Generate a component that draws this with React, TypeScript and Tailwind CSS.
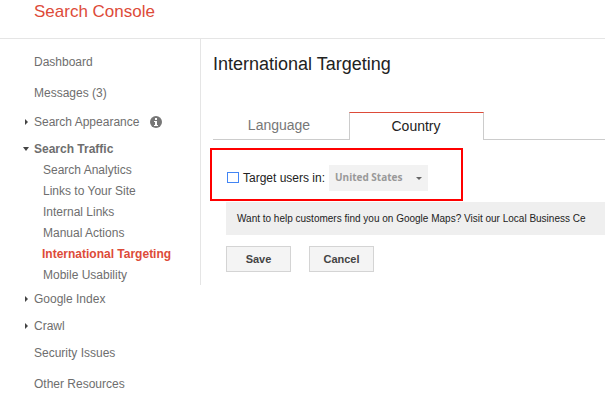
import clsx from "clsx";

interface NavRowProps {
  label: string;
  height: string;
  arrow?: "right" | "down";
  info?: boolean;
}

const trafficLinks = [
  "Search Analytics",
  "Links to Your Site",
  "Internal Links",
  "Manual Actions",
  "International Targeting",
  "Mobile Usability",
];

const Arrow = ({ direction }: { direction?: "right" | "down" }) => (
  <span className="w-3 shrink-0 flex items-center" aria-hidden="true">
    {direction === "right" && (
      <svg width="4" height="6" viewBox="0 0 4 6" className="ml-[3px] mt-px">
        <path d="M0 0L3 3L0 6Z" fill="#444" />
      </svg>
    )}
    {direction === "down" && (
      <svg width="6" height="4" viewBox="0 0 6 4" className="ml-px mt-px">
        <path d="M0 0H6L3 4Z" fill="#444" />
      </svg>
    )}
  </span>
);

const InfoIcon = () => (
  <svg width="12" height="12" viewBox="0 0 12 12" className="ml-[11px]" aria-hidden="true">
    <circle cx="6" cy="6" r="6" fill="#777" />
    <path d="M5 2H7V4H5ZM4 5H7V9H8V10H4V9H5V6H4Z" fill="#fff" />
  </svg>
);

const NavRow = ({ label, height, arrow, info }: NavRowProps) => (
  <a href="#" className={clsx("flex items-center pl-[22px]", height)}>
    <Arrow direction={arrow} />
    <span className={clsx(arrow === "down" && "font-bold")}>{label}</span>
    {info && <InfoIcon />}
  </a>
);

const Sidebar = () => (
  <nav className="w-[200px] shrink-0 pt-[7px] text-[12px] text-[#6e6e6e]">
    <NavRow label="Dashboard" height="h-[31px]" />
    <NavRow label="Messages (3)" height="h-[31px]" />
    <NavRow label="Search Appearance" height="h-[27px]" arrow="right" info />
    <NavRow label="Search Traffic" height="h-[27px]" arrow="down" />
    <ul className="-mt-[3px]">
      {trafficLinks.map((link) => (
        <li key={link}>
          <a
            href="#"
            className={clsx(
              "flex items-center h-[21px]",
              link === "International Targeting"
                ? "pl-[42px] font-bold text-[#dd4b39]"
                : "pl-[43px]"
            )}
          >
            {link}
          </a>
        </li>
      ))}
    </ul>
    <NavRow label="Google Index" height="h-[27px]" arrow="right" />
    <NavRow label="Crawl" height="h-[27px]" arrow="right" />
    <NavRow label="Security Issues" height="h-[27px]" />
    <NavRow label="Other Resources" height="h-[35px]" />
  </nav>
);

const Tabs = () => (
  <div role="tablist" className="mt-[34px] ml-3 flex h-7 text-[14px]">
    <button
      type="button"
      role="tab"
      aria-selected="false"
      className="w-[136px] pr-1 border-b border-[#ccc] text-[#777]"
    >
      Language
    </button>
    <button
      type="button"
      role="tab"
      aria-selected="true"
      className="w-[135px] pr-px border-x border-t border-x-[#ccc] border-t-[#dd4b39] text-[#222]"
    >
      Country
    </button>
    <div className="flex-1 border-b border-[#ccc]" />
  </div>
);

const TargetForm = () => (
  <div className="mt-2 ml-[9px] w-[253px] h-[53px] flex items-center border-2 border-[#f00] pl-[15px] pt-[6px]">
    <input
      id="target"
      type="checkbox"
      className="appearance-none w-3 h-[11px] border border-[#4285f4] bg-white"
    />
    <label htmlFor="target" className="ml-1 w-[86px] text-[12px] text-[#222] whitespace-nowrap">
      Target users in:
    </label>
    <div className="relative">
      <select
        disabled
        aria-label="Country"
        className="appearance-none block w-[99px] h-[26px] pl-[6px] bg-[#f2f2f2] text-[10px] font-bold text-[#999] font-['Open_Sans',sans-serif] opacity-100"
      >
        <option>United States</option>
      </select>
      <svg
        width="6"
        height="3"
        viewBox="0 0 6 3"
        className="absolute right-[6px] top-3 pointer-events-none"
        aria-hidden="true"
      >
        <path d="M0 0H6L3 3Z" fill="#666" />
      </svg>
    </div>
  </div>
);

const FormButton = ({ label }: { label: string }) => (
  <button
    type="button"
    className="w-[65px] h-[26px] border border-[#d4d4d4] bg-[#f4f4f4] text-[11px] font-bold text-[#444]"
  >
    {label}
  </button>
);

const App = () => (
  <div className="min-h-screen overflow-hidden bg-white font-['Liberation_Sans',Arial,sans-serif]">
    <header className="h-[39px] border-b border-[#e5e5e5] pl-[34px]">
      <h1 className="text-[17px] leading-[23px] text-[#dd4b39]">Search Console</h1>
    </header>
    <div className="flex items-start">
      <Sidebar />
      <main className="flex-1 min-w-0 h-[246px] border-l border-[#e5e5e5]">
        <h2 className="mt-[11px] ml-3 text-[18px] leading-7 text-[#222]">
          International Targeting
        </h2>
        <Tabs />
        <TargetForm />
        <p className="mt-px ml-[25px] h-[33px] pl-[11px] bg-[#efefef] text-[10px] leading-[33px] text-[#222] whitespace-nowrap overflow-hidden">
          Want to help customers find you on Google Maps? Visit our Local Business Ce
        </p>
        <div className="mt-[11px] ml-[25px] flex gap-[18px]">
          <FormButton label="Save" />
          <FormButton label="Cancel" />
        </div>
      </main>
    </div>
  </div>
);

export default App;
